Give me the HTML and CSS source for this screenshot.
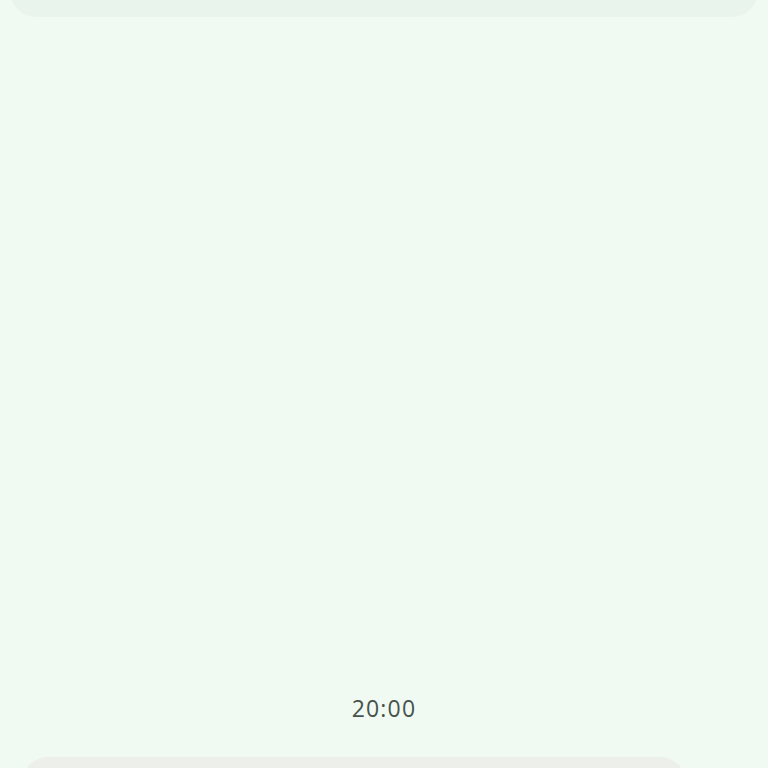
FILE: index.html
```html
<!DOCTYPE html>
<html>
<head>
<meta charset="utf-8">
<link rel="stylesheet" href="styles.css">
</head>
<body>
<div class="page">
  <div class="card-top"></div>
  <div class="spacer"></div>
  <div class="time">20:00</div>
  <div class="card-bottom"></div>
</div>
</body>
</html>
```
FILE: styles.css
```css
html, body {
  margin: 0;
  padding: 0;
  background: #f0faf3;
  overflow: hidden;
  height: 768px;
}
.page {
  height: 768px;
  display: flex;
  flex-direction: column;
  overflow: hidden;
}
.card-top {
  height: 60px;
  margin: -43px 10px 0 10px;
  background: #e9f4ec;
  border-radius: 26px;
  flex: none;
}
.spacer {
  flex: 1;
}
.time {
  font-family: "Open Sans", sans-serif;
  font-size: 23px;
  letter-spacing: 1.2px;
  color: #47534b;
  text-align: center;
  line-height: 30px;
  flex: none;
  margin-bottom: 34px;
}
.card-bottom {
  height: 60px;
  margin: 0 82px -49px 22px;
  background: #ecefea;
  border-radius: 26px;
  flex: none;
}
```
